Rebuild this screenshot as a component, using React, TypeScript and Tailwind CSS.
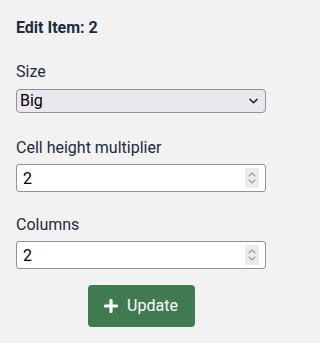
import { useState } from "react";

const SIZES = ["Small", "Medium", "Big"];

function Chevron() {
  return (
    <svg
      aria-hidden
      viewBox="0 0 10 6"
      className="pointer-events-none absolute right-[8px] top-1/2 h-[6px] w-[9px] -translate-y-1/2"
    >
      <path d="M1 1l4 4 4-4" fill="none" stroke="#1b1b1b" strokeWidth="1.6" strokeLinecap="round" strokeLinejoin="round" />
    </svg>
  );
}

// drawn spinner, headless chrome hides the native one until hover
function Spinner() {
  return (
    <span className="pointer-events-none absolute right-[7px] top-1/2 flex h-[20px] w-[14px] -translate-y-1/2 items-center justify-center bg-[#ececec]">
      <svg aria-hidden viewBox="0 0 8 14" className="h-[14px] w-[8px]">
        <path d="M1 5l3-3 3 3M1 9l3 3 3-3" fill="none" stroke="#9a9a9a" strokeWidth="1.1" strokeLinecap="round" strokeLinejoin="round" />
      </svg>
    </span>
  );
}

function NumberField({ label, value, onChange, className }: { label: string; value: number; onChange: (v: number) => void; className?: string }) {
  return (
    <div className={className}>
      <label className="block text-base leading-6 text-[#1d2b3f]">{label}</label>
      <div className="relative mt-1 w-[250px]">
        <input
          type="number"
          min={1}
          value={value}
          onChange={(e) => onChange(Number(e.target.value))}
          className="block h-[28px] w-full appearance-none rounded-[3px] border border-[#8f8f9d] bg-white px-[6px] text-base text-black outline-none [&::-webkit-inner-spin-button]:appearance-none"
        />
        <Spinner />
      </div>
    </div>
  );
}

export default function App() {
  const [size, setSize] = useState("Big");
  const [mult, setMult] = useState(2);
  const [cols, setCols] = useState(2);

  return (
    <div className="min-h-screen w-full bg-[#f2f2f2] pl-4 pt-4 font-['Roboto',sans-serif]">
      <h2 className="text-base leading-6 font-bold text-[#1d2b3f]">Edit Item: 2</h2>

      <div className="mt-5">
        <label className="block text-base leading-6 text-[#1d2b3f]">Size</label>
        <div className="relative mt-[5px] w-[250px]">
          <select
            value={size}
            onChange={(e) => setSize(e.target.value)}
            className="block h-[24px] w-full appearance-none rounded-[4px] border border-[#8f8f9d] bg-[#e9e9ed] pl-[3px] text-base leading-5 text-black outline-none"
          >
            {SIZES.map((s) => (
              <option key={s}>{s}</option>
            ))}
          </select>
          <Chevron />
        </div>
      </div>

      <NumberField className="mt-[23px]" label="Cell height multiplier" value={mult} onChange={setMult} />
      <NumberField className="mt-[21px]" label="Columns" value={cols} onChange={setCols} />

      <div className="mt-4 flex w-[250px] justify-center">
        <button
          type="button"
          className="flex h-[42px] w-[107px] items-center justify-center gap-[9px] rounded-[4px] bg-[#3f7a50] text-base text-white"
        >
          <svg aria-hidden viewBox="0 0 14 14" className="h-[14px] w-[14px]">
            <path d="M7 1.5v11M1.5 7h11" stroke="white" strokeWidth="3.2" strokeLinecap="round" />
          </svg>
          Update
        </button>
      </div>
    </div>
  );
}
